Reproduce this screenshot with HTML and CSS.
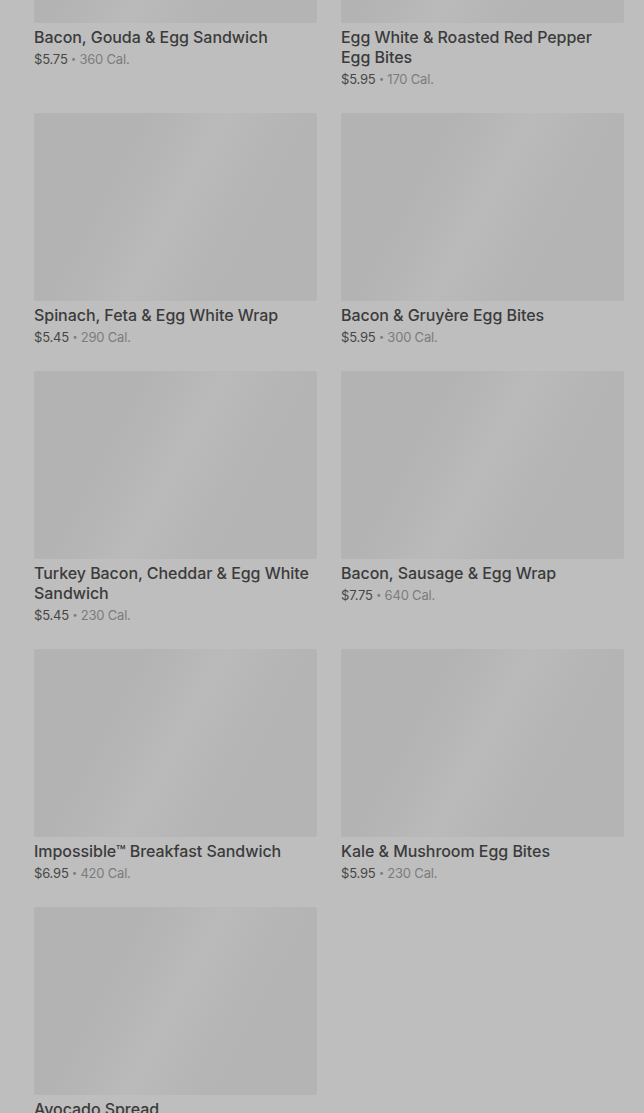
FILE: index.html
```html
<!DOCTYPE html>
<html lang="en">
<head>
    <meta charset="UTF-8">
    <meta name="viewport" content="width=device-width, initial-scale=1.0">
    <title>Breakfast Menu</title>
    <link rel="stylesheet" href="styles.css">
</head>
<body>

    <div class="menu-grid">
        <div class="menu-item">
            <div class="item-image"></div>
            <p class="item-name">Bacon, Gouda &amp; Egg Sandwich</p>
            <p class="item-meta"><span class="price">$5.75</span> <span class="dot">•</span> 360 Cal.</p>
        </div>
        <div class="menu-item">
            <div class="item-image"></div>
            <p class="item-name">Egg White &amp; Roasted Red Pepper Egg Bites</p>
            <p class="item-meta"><span class="price">$5.95</span> <span class="dot">•</span> 170 Cal.</p>
        </div>

        <div class="menu-item">
            <div class="item-image"></div>
            <p class="item-name">Spinach, Feta &amp; Egg White Wrap</p>
            <p class="item-meta"><span class="price">$5.45</span> <span class="dot">•</span> 290 Cal.</p>
        </div>
        <div class="menu-item">
            <div class="item-image"></div>
            <p class="item-name">Bacon &amp; Gruyère Egg Bites</p>
            <p class="item-meta"><span class="price">$5.95</span> <span class="dot">•</span> 300 Cal.</p>
        </div>

        <div class="menu-item">
            <div class="item-image"></div>
            <p class="item-name">Turkey Bacon, Cheddar &amp; Egg White Sandwich</p>
            <p class="item-meta"><span class="price">$5.45</span> <span class="dot">•</span> 230 Cal.</p>
        </div>
        <div class="menu-item">
            <div class="item-image"></div>
            <p class="item-name">Bacon, Sausage &amp; Egg Wrap</p>
            <p class="item-meta"><span class="price">$7.75</span> <span class="dot">•</span> 640 Cal.</p>
        </div>

        <div class="menu-item">
            <div class="item-image"></div>
            <p class="item-name">Impossible™ Breakfast Sandwich</p>
            <p class="item-meta"><span class="price">$6.95</span> <span class="dot">•</span> 420 Cal.</p>
        </div>
        <div class="menu-item">
            <div class="item-image"></div>
            <p class="item-name">Kale &amp; Mushroom Egg Bites</p>
            <p class="item-meta"><span class="price">$5.95</span> <span class="dot">•</span> 230 Cal.</p>
        </div>

        <div class="menu-item">
            <div class="item-image"></div>
            <p class="item-name">Avocado Spread</p>
            <p class="item-meta"><span class="price">$1.25</span> <span class="dot">•</span> 90 Cal.</p>
        </div>
    </div>

</body>
</html>
```

FILE: styles.css
```css
body {
    font-family: Inter, "Noto Sans", sans-serif;
    background-color: #bebebe;
    margin: 0;
    overflow: hidden;
}
.menu-grid {
    display: grid;
    grid-template-columns: 1fr 1fr;
    column-gap: 24px;
    row-gap: 24px;
    padding: 0 20px 0 34px;
    margin-top: -165px; /* list is scrolled */
}
.item-image {
    height: 188px;
    border-radius: 2px;
    background-color: #b5b5b5;
    background-image: linear-gradient(118deg, #b3b3b3 30%, #bababa 50%, #b4b4b4 72%);
}
.item-name {
    margin: 4px 0 0;
    font-size: 16px;
    line-height: 20px;
    font-weight: 500;
    letter-spacing: -0.05px;
    color: #3b3b3b;
}
.item-meta {
    margin: 2px 0 0;
    height: 20px;
    font-size: 13px;
    line-height: 20px;
    letter-spacing: -0.2px;
    color: #7c7c7c;
}
.price {
    color: #474747;
}
.dot {
    font-size: 9px;
    vertical-align: 2px;
}
```
